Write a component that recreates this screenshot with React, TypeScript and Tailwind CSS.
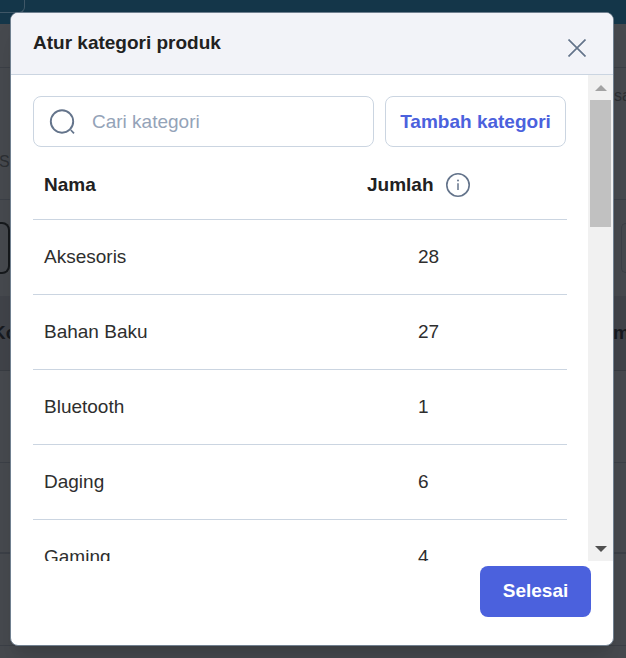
import { useState } from "react";

const categories = [
  { name: "Aksesoris", total: 28 },
  { name: "Bahan Baku", total: 27 },
  { name: "Bluetooth", total: 1 },
  { name: "Daging", total: 6 },
  { name: "Gaming", total: 4 },
];

function SearchIcon() {
  return (
    <svg className="h-7 w-7 shrink-0" viewBox="0 0 28 28" fill="none" stroke="#64748b" aria-hidden="true">
      <circle cx="14" cy="13.5" r="11.2" strokeWidth="1.9" />
      <path d="M22.8 22 26 25.4" strokeWidth="1.7" />
    </svg>
  );
}

function InfoIcon() {
  return (
    <svg className="h-6 w-6" viewBox="0 0 24 24" fill="none" stroke="#64748b" aria-hidden="true">
      <circle cx="12" cy="12" r="11.2" strokeWidth="1.6" />
      <path d="M12 10.2V17" strokeWidth="1.5" />
      <circle cx="12" cy="7.5" r="1" fill="#64748b" stroke="none" />
    </svg>
  );
}

// the dimmed product page that stays behind the dialog
function PageBehind() {
  return (
    <div className="flex h-full flex-col overflow-hidden bg-[#46494e] text-[16px] text-[#2c2f33]" aria-hidden="true">
      <div className="h-6 shrink-0 bg-[#143649]">
        <div className="h-[13px] w-[25px] rounded-br-md border-r border-b border-[#3f5767]"></div>
      </div>
      <div className="h-11 shrink-0 border-b border-[#3b3f46]"></div>
      <div className="flex h-[132px] shrink-0 justify-between border-b border-[#3b3f46]">
        <span className="-ml-px pt-[82px]">ST</span>
        <span className="w-3 pt-4">sa</span>
      </div>
      <div className="flex h-24 shrink-0 items-center justify-between">
        <div className="h-[52px] w-[10px] rounded-r-lg border-2 border-l-0 border-[#16191c]"></div>
        <div className="h-[50px] w-[5px] rounded-l-lg border border-r-0 border-[#3b3f46]"></div>
      </div>
      <div className="flex h-[75px] shrink-0 items-center justify-between border-b border-[#383c42] bg-[#404349] text-[19px] font-bold text-[#171a1f]">
        <span className="-ml-2">Ko</span>
        <span className="w-[13px]">m</span>
      </div>
      <div className="h-[92px] shrink-0 border-b border-[#3b3f46]"></div>
      <div className="h-[91px] shrink-0 border-b-2 border-[#3b3f46]"></div>
      <div className="h-[92px] shrink-0 border-b border-[#3b3f46]"></div>
    </div>
  );
}

function Scrollbar() {
  return (
    <div className="flex w-[25px] shrink-0 flex-col items-center bg-[#f1f1f1]" aria-hidden="true">
      <div className="flex h-[25px] items-center">
        <svg className="h-[6px] w-[12px]" viewBox="0 0 12 6" fill="#a3a3a3"><path d="M6 0 12 6H0z" /></svg>
      </div>
      <div className="h-[127px] w-[21px] bg-[#c1c1c1]"></div>
      <div className="mt-auto flex h-[25px] items-center">
        <svg className="h-[6px] w-[12px]" viewBox="0 0 12 6" fill="#505050"><path d="M0 0H12L6 6z" /></svg>
      </div>
    </div>
  );
}

export default function App() {
  const [search, setSearch] = useState("");
  const [open, setOpen] = useState(true);
  const rows = categories.filter((c) => c.name.toLowerCase().includes(search.toLowerCase()));

  return (
    <div className="relative h-screen font-['Liberation_Sans',Arial,sans-serif] text-[19px] leading-6 text-[#212121]">
      <PageBehind />
      {open && (
        <div className="absolute inset-0 flex py-3 pr-3 pl-[10px]">
          <div
            role="dialog"
            aria-labelledby="dialog-title"
            className="flex w-full flex-col overflow-hidden rounded-lg border border-[#708090] bg-white shadow-xl"
          >
            <div className="flex h-[62px] shrink-0 items-center justify-between border-b border-[#cbd5e1] bg-[#f2f3f8] pr-[27px] pl-[22px]">
              <h1 id="dialog-title" className="pb-[2px] font-bold">Atur kategori produk</h1>
              <button aria-label="Tutup" className="mt-2" onClick={() => setOpen(false)}>
                <svg className="h-[18px] w-[18px]" viewBox="0 0 18 18" fill="none" stroke="#64748b" strokeWidth="1.7">
                  <path d="M.5.5l17 17M17.5.5l-17 17" />
                </svg>
              </button>
            </div>

            <div className="flex min-h-0 flex-1">
              <div className="min-w-0 flex-1 overflow-hidden pt-[21px] pr-[21px] pl-[22px]">
                <div className="flex gap-[11px] pr-px">
                  <label className="flex h-[51px] min-w-0 flex-1 items-center gap-4 rounded-lg border border-[#cbd5e1] pl-[14px]">
                    <SearchIcon />
                    <input
                      type="text"
                      aria-label="Cari kategori"
                      placeholder="Cari kategori"
                      value={search}
                      onChange={(e) => setSearch(e.target.value)}
                      className="min-w-0 flex-1 outline-none placeholder:text-[#94a3b8]"
                    />
                  </label>
                  <button className="h-[51px] w-[181px] rounded-lg border border-[#cbd5e1] font-bold text-[#4b61dd]">
                    Tambah kategori
                  </button>
                </div>

                <table className="w-full table-fixed border-collapse text-left">
                  <thead>
                    <tr className="h-[72px] border-b border-[#cbd5e1]">
                      <th className="pt-[4px] pl-[11px] font-bold">Nama</th>
                      <th className="w-[200px] pt-[4px] font-bold">
                        <span className="flex items-center gap-3">
                          Jumlah
                          <InfoIcon />
                        </span>
                      </th>
                    </tr>
                  </thead>
                  <tbody className="text-[#2e2e2e]">
                    {rows.map((c) => (
                      <tr key={c.name} className="h-[75px] border-b border-[#cbd5e1]">
                        <td className="pl-[11px]">{c.name}</td>
                        <td className="pl-[51px]">{c.total}</td>
                      </tr>
                    ))}
                  </tbody>
                </table>
              </div>
              <Scrollbar />
            </div>

            <div className="flex h-[84px] shrink-0 justify-end pt-[5px] pr-[22px]">
              <button className="h-[51px] w-[111px] rounded-lg bg-[#4b61dd] pb-[2px] font-bold text-white" onClick={() => setOpen(false)}>
                Selesai
              </button>
            </div>
          </div>
        </div>
      )}
    </div>
  );
}
